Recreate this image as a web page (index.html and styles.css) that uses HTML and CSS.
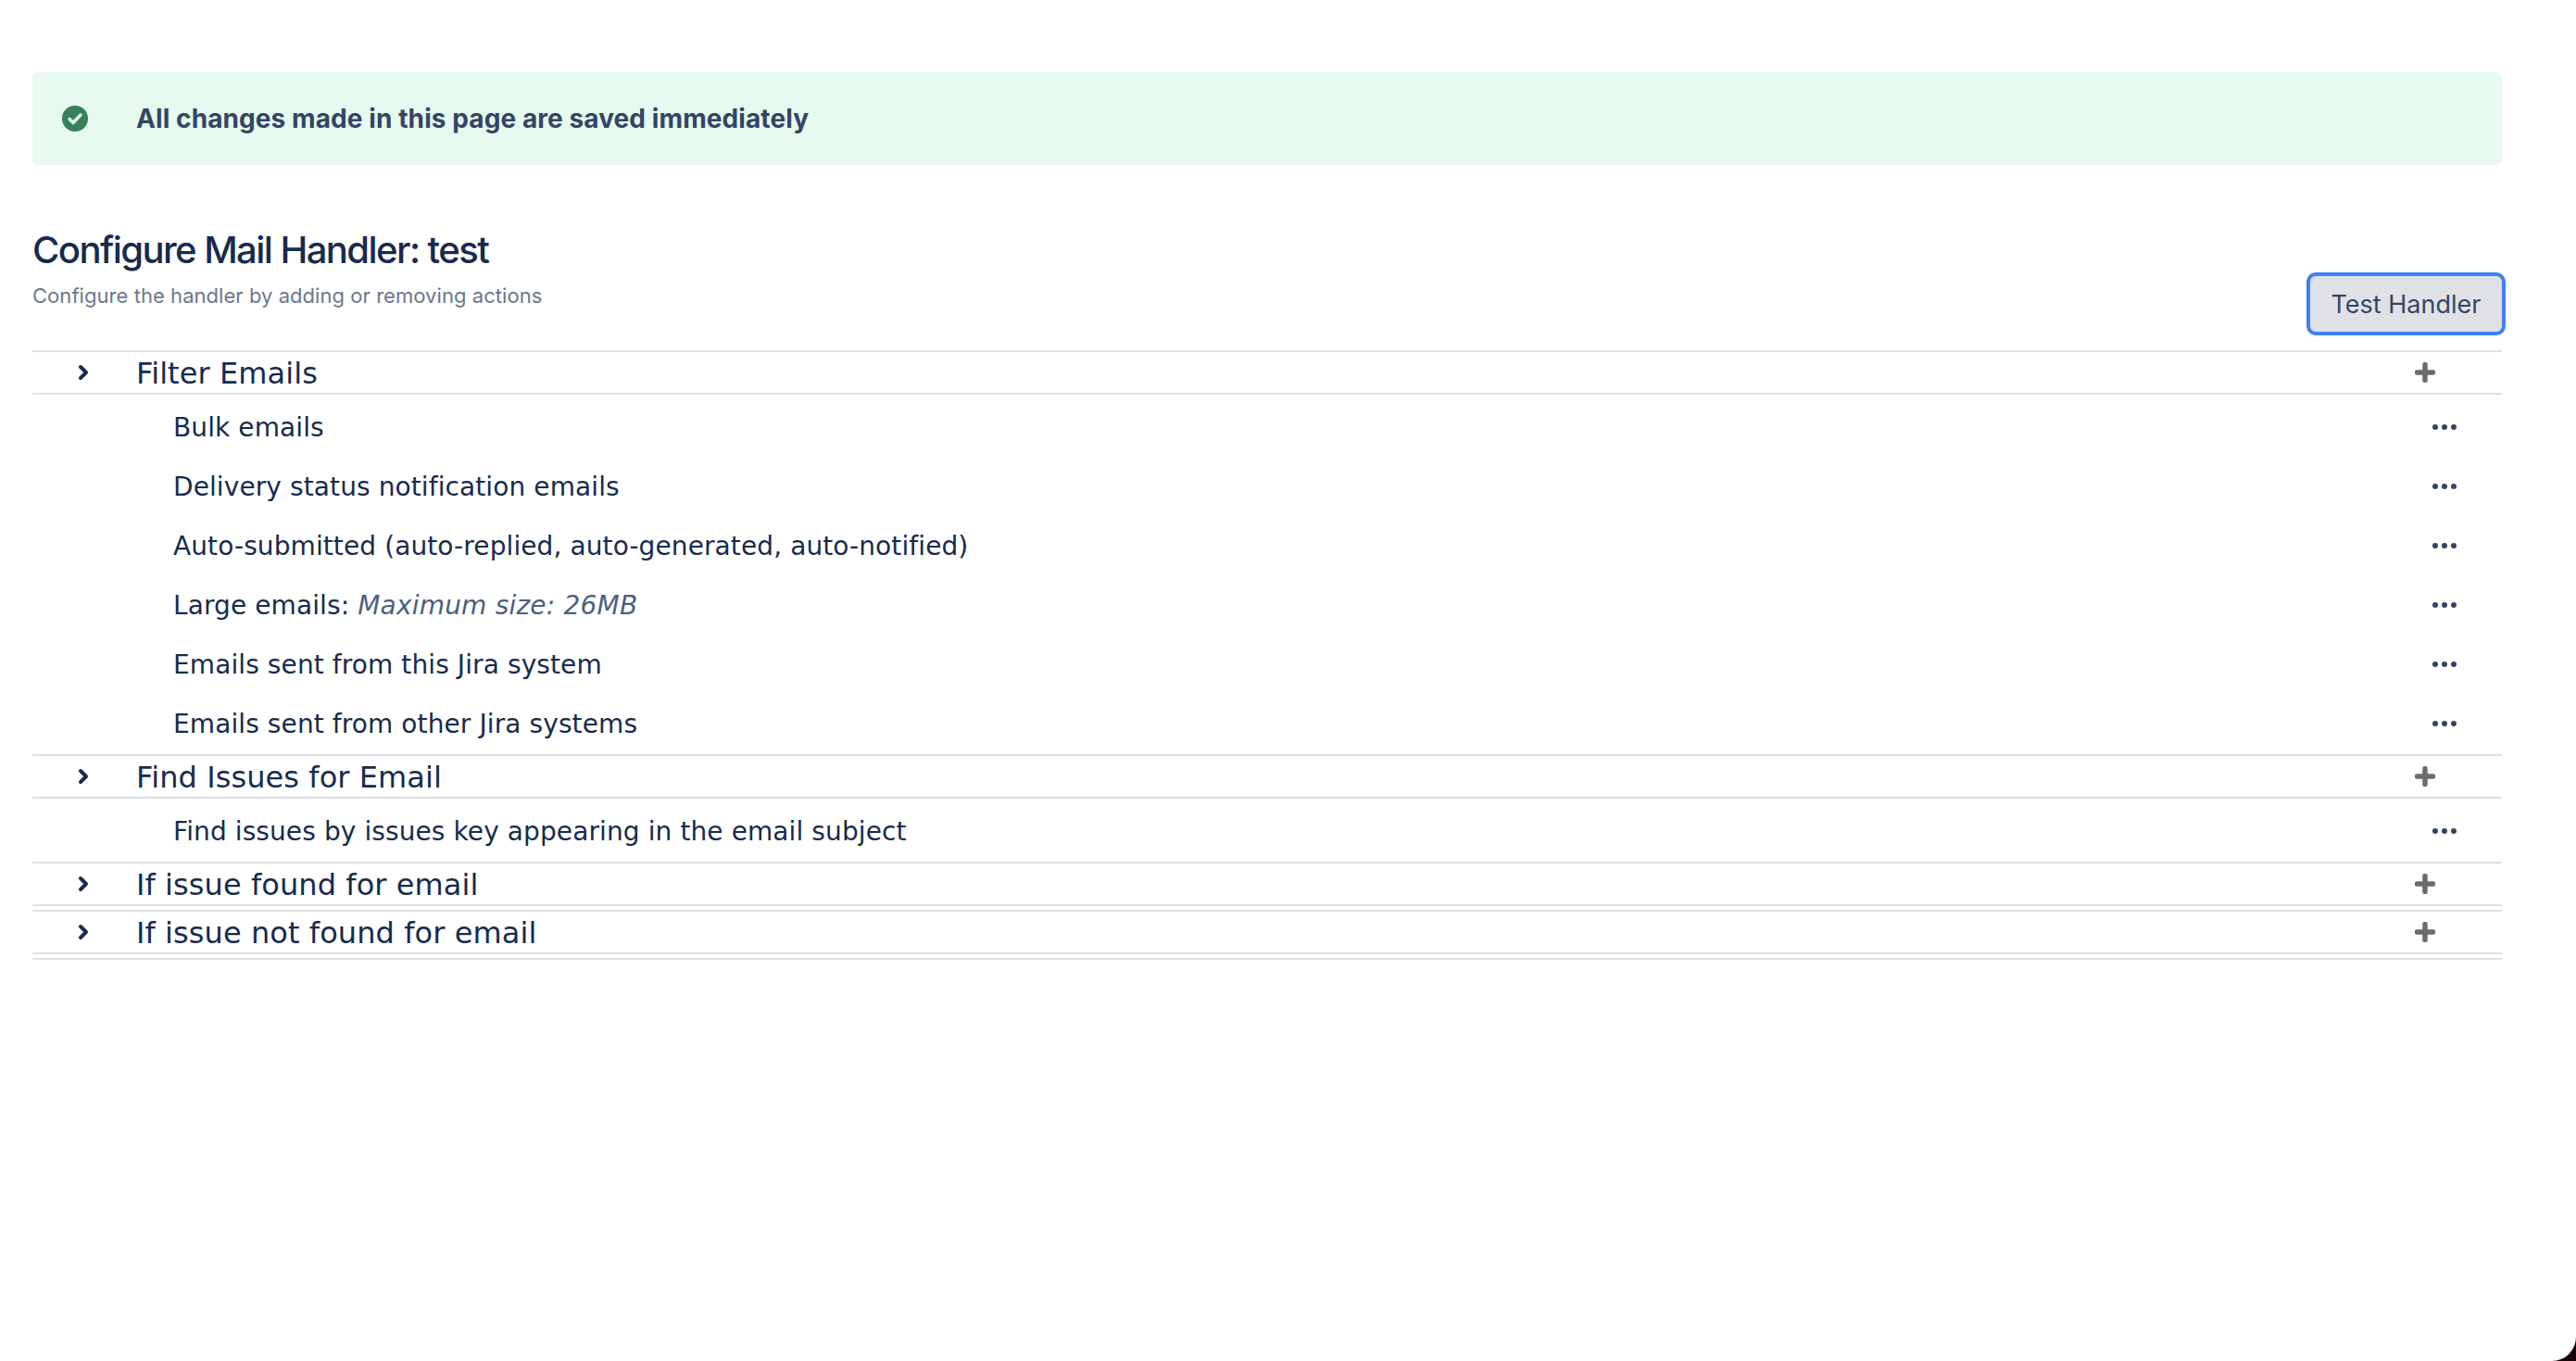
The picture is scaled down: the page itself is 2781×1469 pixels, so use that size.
FILE: index.html
```html
<!DOCTYPE html>
<html lang="en">
<head>
<meta charset="utf-8">
<title>Configure Mail Handler: test</title>
<link rel="stylesheet" href="styles.css">
</head>
<body>
<main class="page">
  <div class="banner">
    <svg class="banner-icon" viewBox="0 0 28 28" aria-hidden="true"><circle cx="14" cy="14" r="14" fill="#36805a"/><path d="M8 14.5l4 4 8-8.5" fill="none" stroke="#e6faf0" stroke-width="3.4" stroke-linecap="round" stroke-linejoin="round"/></svg>
    <span class="banner-text">All changes made in this page are saved immediately</span>
  </div>
  <header class="head">
    <div class="head-text">
      <h1 class="title">Configure Mail Handler: test</h1>
      <p class="subtitle">Configure the handler by adding or removing actions</p>
    </div>
    <button class="test-btn" type="button">Test Handler</button>
  </header>
  <section class="group">
    <div class="group-head">
      <svg class="chevron" viewBox="0 0 12 18" aria-hidden="true"><path d="M3 3l6 6-6 6" /></svg>
      <span class="group-title">Filter Emails</span>
      <svg class="plus" viewBox="0 0 22 22" aria-hidden="true"><path d="M11 2.5v17M2.5 11h17"/></svg>
    </div>
    <ul class="items">
      <li class="item"><span>Bulk emails</span><svg class="dots" viewBox="0 0 28 8" aria-hidden="true"><circle cx="4" cy="4" r="3"/><circle cx="14" cy="4" r="3"/><circle cx="24" cy="4" r="3"/></svg></li>
      <li class="item"><span>Delivery status notification emails</span><svg class="dots" viewBox="0 0 28 8" aria-hidden="true"><circle cx="4" cy="4" r="3"/><circle cx="14" cy="4" r="3"/><circle cx="24" cy="4" r="3"/></svg></li>
      <li class="item"><span>Auto-submitted (auto-replied, auto-generated, auto-notified)</span><svg class="dots" viewBox="0 0 28 8" aria-hidden="true"><circle cx="4" cy="4" r="3"/><circle cx="14" cy="4" r="3"/><circle cx="24" cy="4" r="3"/></svg></li>
      <li class="item"><span>Large emails: <em class="note">Maximum size: 26MB</em></span><svg class="dots" viewBox="0 0 28 8" aria-hidden="true"><circle cx="4" cy="4" r="3"/><circle cx="14" cy="4" r="3"/><circle cx="24" cy="4" r="3"/></svg></li>
      <li class="item"><span>Emails sent from this Jira system</span><svg class="dots" viewBox="0 0 28 8" aria-hidden="true"><circle cx="4" cy="4" r="3"/><circle cx="14" cy="4" r="3"/><circle cx="24" cy="4" r="3"/></svg></li>
      <li class="item"><span>Emails sent from other Jira systems</span><svg class="dots" viewBox="0 0 28 8" aria-hidden="true"><circle cx="4" cy="4" r="3"/><circle cx="14" cy="4" r="3"/><circle cx="24" cy="4" r="3"/></svg></li>
    </ul>
  </section>
  <section class="group">
    <div class="group-head">
      <svg class="chevron" viewBox="0 0 12 18" aria-hidden="true"><path d="M3 3l6 6-6 6" /></svg>
      <span class="group-title">Find Issues for Email</span>
      <svg class="plus" viewBox="0 0 22 22" aria-hidden="true"><path d="M11 2.5v17M2.5 11h17"/></svg>
    </div>
    <ul class="items">
      <li class="item"><span>Find issues by issues key appearing in the email subject</span><svg class="dots" viewBox="0 0 28 8" aria-hidden="true"><circle cx="4" cy="4" r="3"/><circle cx="14" cy="4" r="3"/><circle cx="24" cy="4" r="3"/></svg></li>
    </ul>
  </section>
  <section class="group">
    <div class="group-head">
      <svg class="chevron" viewBox="0 0 12 18" aria-hidden="true"><path d="M3 3l6 6-6 6" /></svg>
      <span class="group-title">If issue found for email</span>
      <svg class="plus" viewBox="0 0 22 22" aria-hidden="true"><path d="M11 2.5v17M2.5 11h17"/></svg>
    </div>
    <ul class="items"></ul>
  </section>
  <section class="group">
    <div class="group-head">
      <svg class="chevron" viewBox="0 0 12 18" aria-hidden="true"><path d="M3 3l6 6-6 6" /></svg>
      <span class="group-title">If issue not found for email</span>
      <svg class="plus" viewBox="0 0 22 22" aria-hidden="true"><path d="M11 2.5v17M2.5 11h17"/></svg>
    </div>
    <ul class="items"></ul>
  </section>
  <div class="end-rule"></div>
</main>
</body>
</html>
```
FILE: styles.css
```css
html {
  height: 100%;
  background: #1a0608;
}
body {
  margin: 0;
  min-height: 100%;
  background: #fff;
  border-bottom-right-radius: 26px;
  overflow: hidden;
}
.page {
  width: 2666px;
  margin-left: 35px;
  padding-top: 78px;
  font-family: "DejaVu Sans", sans-serif;
  color: #172b4d;
}
.banner {
  display: flex;
  align-items: center;
  height: 100px;
  background: #e6faf0;
  border-radius: 6px;
}
.banner-icon {
  width: 28px;
  height: 28px;
  margin-left: 32px;
  flex: none;
}
.banner-text {
  margin-left: 52px;
  font-family: Inter, sans-serif;
  font-weight: 700;
  font-size: 28px;
  letter-spacing: 0.09px;
  color: #344563;
}
.head {
  display: flex;
  justify-content: space-between;
  align-items: flex-end;
  height: 200px;
  padding-bottom: 16px;
  box-sizing: border-box;
}
.title {
  margin: 0;
  font-family: Inter, sans-serif;
  font-weight: 500;
  font-size: 40px;
  line-height: 48px;
  color: #172b4d;
  letter-spacing: -1.55px;
}
.subtitle {
  margin: 11px 0 29px;
  font-family: Inter, sans-serif;
  font-size: 22px;
  line-height: 28px;
  color: #6b778c;
  letter-spacing: 0.05px;
}
.test-btn {
  width: 215px;
  height: 68px;
  margin-right: -4px;
  padding: 0;
  background: #e0e1e6;
  border: 4px solid #4080f5;
  border-radius: 10px;
  font-family: Inter, sans-serif;
  font-size: 27px;
  color: #344563;
}
.group-head {
  display: flex;
  align-items: center;
  height: 44px;
  border-top: 2px solid #dfe0e6;
  border-bottom: 2px solid #dfe0e6;
  font-size: 32px;
  letter-spacing: 0.08px;
}
.chevron {
  width: 12px;
  height: 18px;
  margin-left: 49px;
  margin-right: 51px;
  flex: none;
  fill: none;
  stroke: #172b4d;
  stroke-width: 4;
  stroke-linecap: round;
  stroke-linejoin: round;
}
.group-title {
  flex: 1;
  padding-top: 1px;
}
.plus {
  width: 22px;
  height: 22px;
  margin-right: 72px;
  flex: none;
  fill: none;
  stroke: #6b6b6b;
  stroke-width: 5.5;
  stroke-linecap: round;
}
.items {
  list-style: none;
  margin: 0;
  padding: 3px 0 1px;
}
.item {
  display: flex;
  justify-content: space-between;
  align-items: center;
  height: 64px;
  padding-left: 152px;
  padding-right: 48px;
  font-size: 28px;
  letter-spacing: 0.1px;
}
.note {
  color: #4a6080;
  letter-spacing: 0.2px;
}
.dots {
  width: 28px;
  height: 8px;
  flex: none;
  fill: #344563;
}
.end-rule {
  height: 2px;
  background: #dfe0e6;
}
```
